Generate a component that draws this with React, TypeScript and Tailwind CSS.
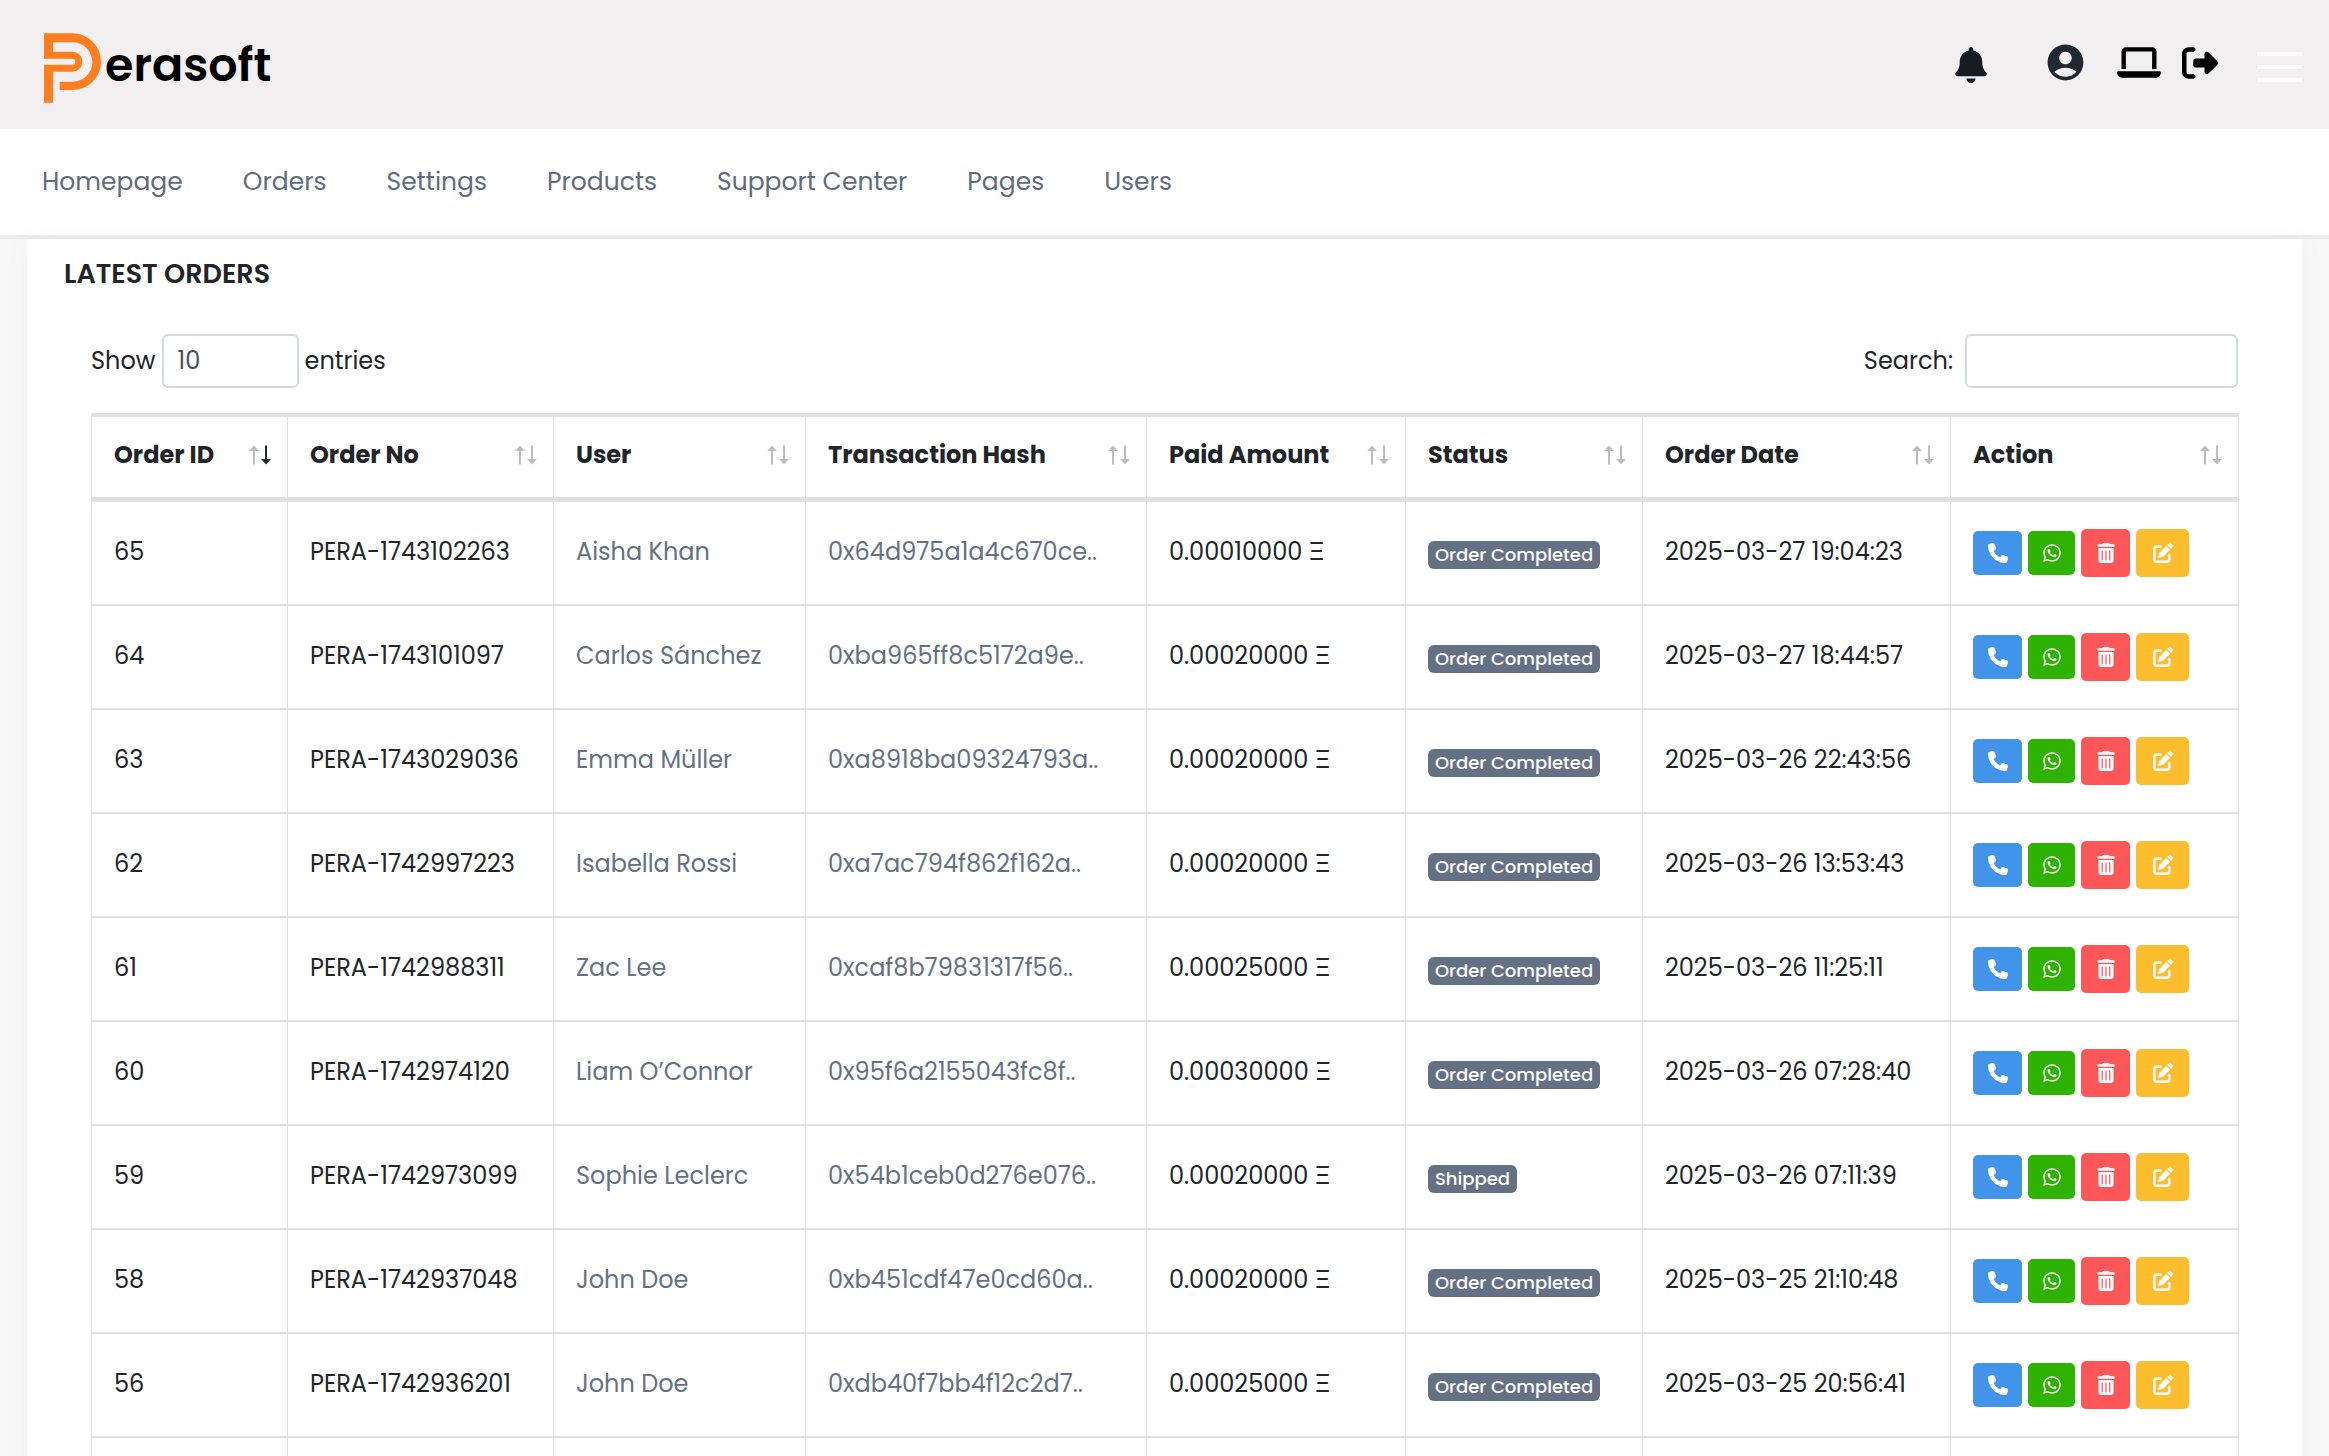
import React, { useState } from 'react';
import { FaBell, FaLaptop, FaPenToSquare, FaPhone, FaRightFromBracket, FaTrashCan, FaWhatsapp } from 'react-icons/fa6';
import { MdAccountCircle } from 'react-icons/md';

interface Order {
  id: number;
  no: string;
  user: string;
  hash: string;
  amount: string;
  status: string;
  date: string;
}

const ORDERS: Order[] = [
  { id: 65, no: 'PERA-1743102263', user: 'Aisha Khan', hash: '0x64d975a1a4c670ce..', amount: '0.00010000', status: 'Order Completed', date: '2025-03-27 19:04:23' },
  { id: 64, no: 'PERA-1743101097', user: 'Carlos Sánchez', hash: '0xba965ff8c5172a9e..', amount: '0.00020000', status: 'Order Completed', date: '2025-03-27 18:44:57' },
  { id: 63, no: 'PERA-1743029036', user: 'Emma Müller', hash: '0xa8918ba09324793a..', amount: '0.00020000', status: 'Order Completed', date: '2025-03-26 22:43:56' },
  { id: 62, no: 'PERA-1742997223', user: 'Isabella Rossi', hash: '0xa7ac794f862f162a..', amount: '0.00020000', status: 'Order Completed', date: '2025-03-26 13:53:43' },
  { id: 61, no: 'PERA-1742988311', user: 'Zac Lee', hash: '0xcaf8b79831317f56..', amount: '0.00025000', status: 'Order Completed', date: '2025-03-26 11:25:11' },
  { id: 60, no: 'PERA-1742974120', user: 'Liam O’Connor', hash: '0x95f6a2155043fc8f..', amount: '0.00030000', status: 'Order Completed', date: '2025-03-26 07:28:40' },
  { id: 59, no: 'PERA-1742973099', user: 'Sophie Leclerc', hash: '0x54b1ceb0d276e076..', amount: '0.00020000', status: 'Shipped', date: '2025-03-26 07:11:39' },
  { id: 58, no: 'PERA-1742937048', user: 'John Doe', hash: '0xb451cdf47e0cd60a..', amount: '0.00020000', status: 'Order Completed', date: '2025-03-25 21:10:48' },
  { id: 56, no: 'PERA-1742936201', user: 'John Doe', hash: '0xdb40f7bb4f12c2d7..', amount: '0.00025000', status: 'Order Completed', date: '2025-03-25 20:56:41' },
];

const NAV_ITEMS = ['Homepage', 'Orders', 'Settings', 'Products', 'Support Center', 'Pages', 'Users'];

const COLUMNS = [
  { label: 'Order ID', width: 'w-[196px]' },
  { label: 'Order No', width: 'w-[266px]' },
  { label: 'User', width: 'w-[252px]' },
  { label: 'Transaction Hash', width: 'w-[341px]' },
  { label: 'Paid Amount', width: 'w-[259px]' },
  { label: 'Status', width: 'w-[237px]' },
  { label: 'Order Date', width: 'w-[308px]' },
  { label: 'Action', width: 'w-[288px]' },
];

const Logo: React.FC = () => (
  <a href="#" aria-label="Perasoft" className="flex items-start gap-1 pt-[6px]">
    <svg viewBox="133 98 171 208" className="h-[70px] w-[57px]" fill="#ff7f1e" aria-hidden="true">
      <path d="M133 98H219A85 85 0 0 1 219 268H180V243H219A59 59 0 0 0 219 125H160V153H218A30 30 0 0 1 218 213H160V306H133V192H218A9 9 0 0 0 218 174H133Z" />
    </svg>
    <span className="text-[46px] font-semibold leading-[64px] text-black">erasoft</span>
  </a>
);

const SortIcon: React.FC<{ active: boolean }> = ({ active }) => (
  <svg viewBox="0 0 22 20" className="h-5 w-[22px] shrink-0" aria-hidden="true">
    <path d="M5 0.5L10 6H6V19.5H4V6H0Z" fill="#bcbdbe" />
    <path d="M17 19.5L22 14H18V0.5H16V14H12Z" fill={active ? '#212529' : '#bcbdbe'} />
  </svg>
);

const Header: React.FC = () => (
  <header className="flex h-[129px] items-center justify-between bg-[#f1eff0] pl-[44px] pr-[27px]">
    <Logo />
    <div className="flex items-center">
      <button type="button" aria-label="Notifications" className="mr-[57px]">
        <FaBell className="h-9 w-8 text-[#171b24]" />
      </button>
      <div className="flex items-center pb-1">
        <button type="button" aria-label="Account" className="mr-[30px]">
          <MdAccountCircle className="size-[43px] text-[#212832]" />
        </button>
        <button type="button" aria-label="View site" className="mr-[21px]">
          <FaLaptop className="h-[35px] w-[44px] text-black" />
        </button>
        <button type="button" aria-label="Sign out" className="mr-[39px]">
          <FaRightFromBracket className="size-9 text-black" />
        </button>
      </div>
      <button type="button" aria-label="Toggle menu" className="flex w-[45px] flex-col gap-[9px] pt-1">
        <span className="h-1 w-full bg-[#fcfbfb]" />
        <span className="h-1 w-full bg-[#fcfbfb]" />
        <span className="h-1 w-full bg-[#fcfbfb]" />
      </button>
    </div>
  </header>
);

const OrderActions: React.FC = () => (
  <div className="flex items-center gap-[6px] text-white">
    <button type="button" aria-label="Call" className="flex h-11 w-[49px] items-center justify-center rounded-[5px] bg-[#4294ea]">
      <FaPhone className="size-5" />
    </button>
    <button type="button" aria-label="WhatsApp" className="flex h-11 w-[47px] items-center justify-center rounded-[5px] bg-[#2db300]">
      <FaWhatsapp className="size-5" />
    </button>
    <button type="button" aria-label="Delete" className="flex h-12 w-[49px] items-center justify-center rounded-[5px] bg-[#ff5757]">
      <FaTrashCan className="size-5" />
    </button>
    <button type="button" aria-label="Edit" className="flex h-12 w-[53px] items-center justify-center rounded-[5px] bg-[#fdbe2e]">
      <FaPenToSquare className="size-5" />
    </button>
  </div>
);

const App: React.FC = () => {
  const [search, setSearch] = useState('');
  const [length, setLength] = useState('10');

  const cell = 'border-r border-t-2 border-[#dee2e6] pl-[22px]';
  const textCell = `${cell} pb-[3px]`;
  const rows = ORDERS.filter((o) => Object.values(o).join(' ').toLowerCase().includes(search.toLowerCase()));

  return (
    <div className="h-screen overflow-hidden bg-[#f8f8f8] font-['Poppins','Inter',sans-serif] text-2xl text-[#212529]">
      <Header />

      <nav className="flex h-[110px] items-center gap-[60px] border-b-4 border-[#ececec] bg-white px-[42px] text-[25px] text-[#5f6c7d]">
        {NAV_ITEMS.map((item) => (
          <a key={item} href="#" className="whitespace-nowrap">{item}</a>
        ))}
      </nav>

      <main className="mx-[27px] bg-white px-[64px] pt-[15px] shadow-[0_0_30px_rgba(0,0,0,0.03)]">
        <h1 className="-ml-[27px] text-[27px] font-semibold leading-10">LATEST ORDERS</h1>

        <div className="mb-[25px] mt-10 flex items-center justify-between">
          <label className="flex items-center gap-[6px]">
            Show
            <select
              value={length}
              onChange={(e) => setLength(e.target.value)}
              className="h-[54px] w-[137px] appearance-none rounded-[6px] border-2 border-[#d3d9df] bg-white px-[14px] text-[#495057]"
            >
              <option>10</option>
              <option>25</option>
              <option>50</option>
              <option>100</option>
            </select>
            entries
          </label>
          <label className="flex items-center gap-3">
            Search:
            <input
              type="search"
              value={search}
              onChange={(e) => setSearch(e.target.value)}
              className="h-[54px] w-[273px] rounded-[6px] border-2 border-[#d3d9df] bg-white px-[14px]"
            />
          </label>
        </div>

        <table className="w-full table-fixed border-separate border-spacing-0 border-l border-t-2 border-[#dee2e6]">
          <thead>
            <tr>
              {COLUMNS.map((col, idx) => (
                <th key={col.label} className={`${col.width} h-[85px] whitespace-nowrap border-b-[3px] border-r border-t-2 border-[#dee2e6] pb-1 pl-[22px] pr-4 text-left font-bold`}>
                  <div className="flex items-center justify-between">
                    {col.label}
                    <SortIcon active={idx === 0} />
                  </div>
                </th>
              ))}
            </tr>
          </thead>
          <tbody>
            {rows.map((order) => (
              <tr key={order.id} className="h-[104px] whitespace-nowrap">
                <td className={textCell}>{order.id}</td>
                <td className={textCell}>{order.no}</td>
                <td className={textCell}><a href="#" className="text-[#647184]">{order.user}</a></td>
                <td className={textCell}><a href="#" className="text-[#647184]">{order.hash}</a></td>
                <td className={textCell}>{order.amount} Ξ</td>
                <td className={`${cell} pt-[3px]`}>
                  <span className="flex h-7 w-fit items-center rounded-[6px] bg-[#647184] px-[7px] text-lg font-medium text-white">{order.status}</span>
                </td>
                <td className={textCell}>{order.date}</td>
                <td className={cell}><OrderActions /></td>
              </tr>
            ))}
            <tr className="h-[104px]">
              {COLUMNS.map((col) => (
                <td key={col.label} className={cell} />
              ))}
            </tr>
          </tbody>
        </table>
      </main>
    </div>
  );
};

export default App;
